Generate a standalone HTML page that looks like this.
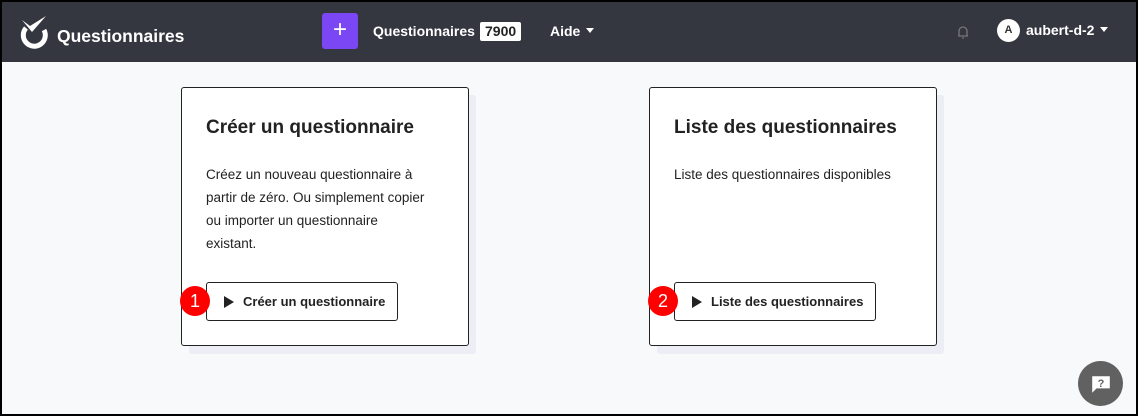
<!DOCTYPE html>
<html><head><meta charset="utf-8"><style>
*{box-sizing:border-box;margin:0;padding:0}
body{width:1138px;height:416px;overflow:hidden;font-family:"Liberation Sans",sans-serif;background:#000;position:relative}
.frame{position:absolute;left:2px;top:2px;width:1134px;height:412px;background:#f8f9fb;overflow:hidden}
.nav{position:absolute;left:0;top:0;width:1134px;height:60px;background:#343640;color:#fff}
.brand{position:absolute;left:55px;top:24px;font-size:17.5px;font-weight:bold}
.plus{position:absolute;left:320px;top:11px;width:36px;height:36px;background:#7b47f5;border-radius:3px;color:#fff;font-size:24px;text-align:center;line-height:34px}
.q{position:absolute;left:371px;top:21px;font-size:14px;font-weight:bold}
.badge{position:absolute;left:478px;top:20px;background:#fff;color:#222;font-size:14px;font-weight:bold;padding:1px 5px;border-radius:2px;height:19px;line-height:17px}
.aide{position:absolute;left:548px;top:21px;font-size:14px;font-weight:bold}
.caret{display:inline-block;border-left:4px solid transparent;border-right:4px solid transparent;border-top:5px solid #fff;vertical-align:middle;margin-left:6px;margin-top:-3px}
.av{position:absolute;left:995px;top:17px;width:23px;height:23px;border-radius:50%;background:#fff;color:#333;font-size:11px;font-weight:bold;text-align:center;line-height:23px}
.user{position:absolute;left:1024px;top:20px;font-size:14px;font-weight:bold}
.sh{position:absolute;background:#ecedf5;border-radius:3px}
.card{position:absolute;background:#fff;border:1px solid #222;border-radius:3px;color:#222}
.card h2{position:absolute;left:24px;top:29px;font-size:19px;font-weight:bold}
.card p{position:absolute;left:24px;top:75px;font-size:13.5px;line-height:23px;width:250px;white-space:nowrap}
.btn{position:absolute;left:24px;top:194px;height:39px;border:1px solid #222;border-radius:3px;font-size:13px;font-weight:bold;line-height:37px;padding:0 12px 0 36px}
.btn:before{content:"";position:absolute;left:17px;top:13px;border-top:6px solid transparent;border-bottom:6px solid transparent;border-left:10px solid #222}
.num{position:absolute;width:30px;height:30px;border-radius:50%;background:#f00;color:#fff;font-size:18px;text-align:center;line-height:30px}
.help{position:absolute;left:1076px;top:359px;width:45px;height:45px;border-radius:50%;background:#616161}
</style></head><body><div class="frame">
<div class="nav">
<svg style="position:absolute;left:16px;top:12px" width="34" height="36" viewBox="0 0 34 36"><g fill="none" stroke="#fff" stroke-width="5"><path d="M8 14 A11 11 0 1 0 26 16"/></g><path d="M4 6 L12 12 L28 2 L14 18 Z" fill="#fff"/></svg>
<div class="brand">Questionnaires</div>
<div class="plus">+</div>
<div class="q">Questionnaires</div><div class="badge">7900</div>
<div class="aide">Aide<span class="caret"></span></div>
<svg style="position:absolute;left:954px;top:22px" width="14" height="16" viewBox="0 0 14 16"><path d="M3 12V7a4 4 0 0 1 8 0v5H3zM2 12h10M6 14h2" fill="none" stroke="#777" stroke-width="1.3"/></svg>
<div class="av">A</div>
<div class="user">aubert-d-2<span class="caret"></span></div>
</div>
<div class="sh" style="left:187px;top:93px;width:287px;height:259px"></div>
<div class="card" style="left:179px;top:85px;width:288px;height:259px"><h2>Créer un questionnaire</h2><p>Créez un nouveau questionnaire à<br>partir de zéro. Ou simplement copier<br>ou importer un questionnaire<br>existant.</p><div class="btn">Créer un questionnaire</div></div>
<div class="num" style="left:178px;top:284px">1</div>
<div class="sh" style="left:655px;top:93px;width:287px;height:259px"></div>
<div class="card" style="left:647px;top:85px;width:288px;height:259px"><h2>Liste des questionnaires</h2><p>Liste des questionnaires disponibles</p><div class="btn">Liste des questionnaires</div></div>
<div class="num" style="left:646px;top:284px">2</div>
<div class="help"><svg style="position:absolute;left:12px;top:12px" width="22" height="22" viewBox="0 0 20 20"><path d="M2 3h16v11H6l-4 4z" fill="#fff"/><text x="10" y="12.5" font-size="10" font-weight="bold" text-anchor="middle" fill="#616161" font-family="Liberation Sans">?</text></svg></div>
</div></body></html>
